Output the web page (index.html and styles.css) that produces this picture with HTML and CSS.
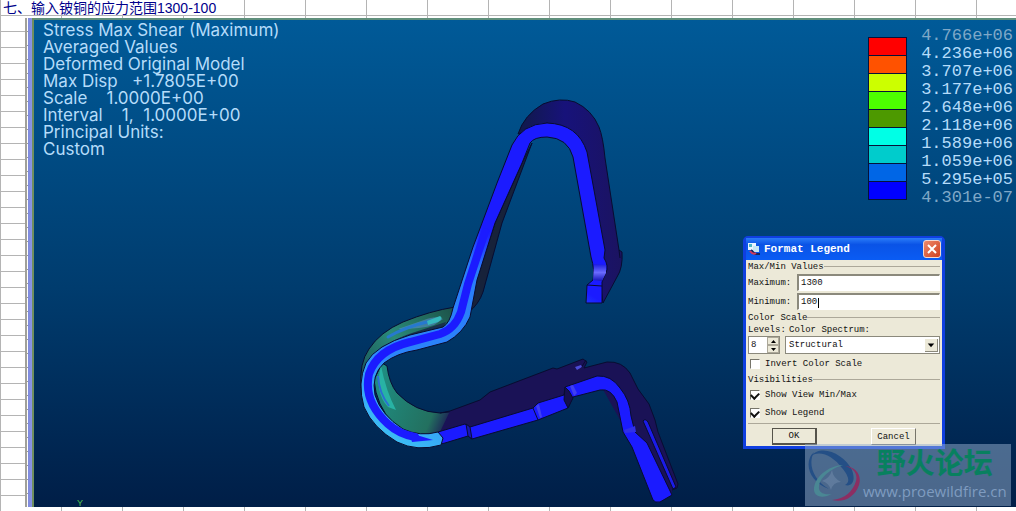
FILE: index.html
```
<!DOCTYPE html>
<html lang="zh">
<head>
    <meta charset="UTF-8">
    <title>输入铍铜的应力范围</title>
    <link rel="stylesheet" href="styles.css">
</head>
<body>
    <h1>七、输入铍铜的应力范围1300-100</h1>

    <main class="window">
        <div class="frame-edge"></div>
        <div class="viewport">
            <!-- 变形模型 -->
            <svg class="model" viewBox="34 20 982 487" preserveAspectRatio="xMinYMin meet" aria-hidden="true">
                <defs>
                    <linearGradient id="arch" x1="0" y1="0" x2="1" y2="0">
                        <stop offset="0" stop-color="#101a48"/>
                        <stop offset="0.45" stop-color="#17127a"/>
                        <stop offset="1" stop-color="#1b1360"/>
                    </linearGradient>
                    <linearGradient id="bowl" gradientUnits="userSpaceOnUse" x1="380" y1="380" x2="456" y2="410">
                        <stop offset="0" stop-color="#1f8c80"/>
                        <stop offset="0.75" stop-color="#23705f"/>
                        <stop offset="1" stop-color="#1b1555"/>
                    </linearGradient>
                    <linearGradient id="band" gradientUnits="userSpaceOnUse" x1="362" y1="370" x2="455" y2="308">
                        <stop offset="0" stop-color="#1c5c5c"/>
                        <stop offset="0.4" stop-color="#2a8a78"/>
                        <stop offset="1" stop-color="#1c5148"/>
                    </linearGradient>
                    <linearGradient id="stress" gradientUnits="userSpaceOnUse" x1="505" y1="230" x2="380" y2="430">
                        <stop offset="0.04" stop-color="#1b1bff"/>
                        <stop offset="0.2" stop-color="#2a7dfa"/>
                        <stop offset="0.7" stop-color="#2b84fa"/>
                        <stop offset="1" stop-color="#3cbcf4"/>
                    </linearGradient>
                    <linearGradient id="shine" x1="0" y1="0" x2="0" y2="1">
                        <stop offset="0" stop-color="#1b1be0"/>
                        <stop offset="0.5" stop-color="#6b6bff"/>
                        <stop offset="1" stop-color="#1616b8"/>
                    </linearGradient>
                </defs>
                <g stroke="#080c30" stroke-width="1" stroke-linejoin="round">
                    <!-- 上部弯臂 -->
                    <path fill="#17223a" d="M532 143L502 223L483 292Q479 304 468 313L470 300L495 223L522 163Z"/>
                    <path fill="url(#arch)" d="M518 134Q524 115 543 104Q560 97 575 102Q592 110 599 127Q603 137 605 158L619 250L622 252Q623 268 617 277L603 303L586 180L573 132L547 123Z"/>
                    <path fill="none" d="M619 250L620 258"/>
                    <!-- 弯勺背面 -->
                    <path fill="url(#band)" d="M455 307Q430 311 403 322Q380 332 369 349Q359 363 361 388L372 375L400 346L443 330L458 315Z"/>
                    <path fill="#18304c" stroke="none" d="M372 360Q384 342 412 333L446 322L443 329L392 345L372 363Z"/>
                    <path fill="url(#bowl)" d="M382 363L387 366Q389 383 397 393Q415 412 440 413L458 411L470 425L438 434Q410 437 394 425Q376 405 374 380Z"/>
                    <!-- 底板 -->
                    <path fill="#1a1256" stroke="none" d="M450 411L480 400L490 392L553 368L557 369L583 359L587 362L584 368L607 362Q622 361 630 373L638 389L649 404L655 420L658 432L678 484L677 488L672 490L672 495L660 502L620 420L600 384L568 395L540 410L472 434L440 432Z"/>
                    <path fill="none" d="M440 413L450 411L480 400L490 392L553 368L557 369L583 359L587 362L584 368L607 362Q622 361 630 373L638 389L649 404L655 420L658 432L678 484L677 488L672 490"/>
                    <path fill="#1b1bff" d="M438 432L465 424L470 427L533 408L538 403L564 395L565 387L597 376Q611 375 620 388Q630 400 631 416L635 432L647 443L672 495L660 502Q655 503 653 500L632 447L623 432L617 402Q611 388 600 390L573 397L568 408L538 420L472 439L468 436L445 443L428 447Z"/>
                    <path fill="#1b1be8" d="M643 421Q645 418 648 422L676 487L673 489Z"/>
                    <path fill="#15104d" d="M565 387L569 391L573 398L568 408L564 400Z"/>
                    <path fill="#1717b0" d="M466 424L470 427L472 439L468 436Z"/>
                    <path fill="none" d="M533 408L538 420M581 368L586 360"/>
                    <!-- 主截面 -->
                    <path fill="url(#stress)" d="M470 317Q463 333 447 342L417 350Q397 353 384 363Q371 375 375 395Q381 415 403 429Q420 437 438 432L443 438L441 445Q417 452 397 442Q373 428 364 407Q357 383 366 363Q376 345 410 335L443 327Q450 323 453 308L473 247L497 183L512 145Q522 124 547 123Q578 124 587 152L605 250L604 258Q609 266 606 273L602 282L602 303L586 303L587 285L593 280Q595 270 591 257L573 157Q568 138 547 137Q534 137 530 143L522 163L495 223L477 280Z"/>
                </g>
                <path fill="none" stroke="#1b1bff" stroke-width="8" stroke-linecap="round" d="M485 232L468 284L461 312Q455 329 440 334L410 342Q377 350 369 374Q363 401 388 424Q399 434 415 437"/>
                <path fill="#1b1bff" d="M410 433L433 440L412 442Z"/>
                <path fill="#6d9dff" d="M443 319Q437 315 424 320L398 329Q422 329 434 325Z" opacity="0.4"/>
                <path fill="none" stroke="#2679cf" stroke-width="3" stroke-linecap="round" d="M388 337Q405 327 431 321"/>
                <path fill="#35b9bd" d="M427 321L440 316Q444 318 438 322L428 325Z"/>
                <path fill="#28b2a4" d="M381 366Q386 391 396 410L388 407Q374 392 381 366Z"/>
                <path fill="none" stroke="#2a70d0" stroke-width="2" d="M378 376Q379 393 389 406"/>
                <path fill="url(#shine)" d="M594 264L606 265L606 273L602 281L593 280Z"/>
                <path fill="none" stroke="#080c30" d="M587 285L602 286"/>
                <path fill="#4040f0" d="M570 386L573 385L577 393L574 396ZM536 406L539 404L542 417L540 418Z"/>
                <path fill="#3030e8" d="M624 430L635 426L636 432L625 433Z"/>
                <path fill="#4b4bd8" d="M575 367L581 365L582 367L577 370Z"/>
                <text class="axis" x="77" y="506">Y</text>
            </svg>

            <div class="info">
                <p>Stress Max Shear (Maximum)</p>
                <p>Averaged Values</p>
                <p>Deformed Original Model</p>
                <p>Max Disp   +1.7805E+00</p>
                <p>Scale    1.0000E+00</p>
                <p>Interval    1,  1.0000E+00</p>
                <p>Principal Units:</p>
                <p>Custom</p>
            </div>

            <div class="legend">
                <ul class="colors">
                    <li class="red"></li>
                    <li class="orange"></li>
                    <li class="yellow"></li>
                    <li class="lime"></li>
                    <li class="green"></li>
                    <li class="aqua"></li>
                    <li class="teal"></li>
                    <li class="azure"></li>
                    <li class="blue"></li>
                </ul>
                <ul class="values">
                    <li class="limit">4.766e+06</li>
                    <li>4.236e+06</li>
                    <li>3.707e+06</li>
                    <li>3.177e+06</li>
                    <li>2.648e+06</li>
                    <li>2.118e+06</li>
                    <li>1.589e+06</li>
                    <li>1.059e+06</li>
                    <li>5.295e+05</li>
                    <li class="limit">4.301e-07</li>
                </ul>
            </div>

            <form class="dialog">
                <div class="titlebar">
                    <svg width="14" height="14" viewBox="0 0 14 14" aria-hidden="true">
                        <rect x="1" y="1" width="8" height="7" fill="#e8f4ff"/>
                        <rect x="2" y="2" width="3" height="3" fill="#49b5c5"/>
                        <rect x="6" y="4" width="6" height="6" fill="#c6e6f4"/>
                        <path d="M4 8L8 12L13 12" fill="none" stroke="#18265e" stroke-width="2"/>
                        <path d="M3 9Q6 13 9 11" fill="none" stroke="#d23b5c" stroke-width="2"/>
                    </svg>
                    <h2>Format Legend</h2>
                    <button type="button" class="close" aria-label="Close">
                        <svg width="10" height="10" viewBox="0 0 10 10"><path d="M1 1L9 9M9 1L1 9" stroke="#fff" stroke-width="2"/></svg>
                    </button>
                </div>
                <div class="content">
                    <h3>Max/Min Values</h3>
                    <div class="row">
                        <label for="maximum">Maximum:</label>
                        <input type="text" id="maximum" value="1300">
                    </div>
                    <div class="row">
                        <label for="minimum">Minimum:</label>
                        <input type="text" id="minimum" class="editing" value="100">
                    </div>
                    <h3>Color Scale</h3>
                    <div class="scale">
                        <label for="levels">Levels:</label>
                        <label for="spectrum" class="spectrum-label">Color Spectrum:</label>
                        <div class="spin">
                            <input type="text" id="levels" value="8">
                            <div class="arrows">
                                <button type="button" aria-label="Up"><svg width="5" height="3" viewBox="0 0 5 3"><path d="M0 3L2.500 0L5 3Z"/></svg></button>
                                <button type="button" aria-label="Down"><svg width="5" height="3" viewBox="0 0 5 3"><path d="M0 0L2.500 3L5 0Z"/></svg></button>
                            </div>
                        </div>
                        <div class="drop">
                            <select id="spectrum"><option>Structural</option></select>
                            <svg width="13" height="13" viewBox="0 0 13 13" aria-hidden="true"><path d="M3 5H10L6.500 9Z"/></svg>
                        </div>
                    </div>
                    <label class="check"><input type="checkbox">Invert Color Scale</label>
                    <h3>Visibilities</h3>
                    <label class="check"><input type="checkbox" checked>Show View Min/Max</label>
                    <label class="check"><input type="checkbox" checked>Show Legend</label>
                    <div class="buttons">
                        <button type="submit" class="default">OK</button>
                        <button type="button">Cancel</button>
                    </div>
                </div>
            </form>

            <div class="watermark">
                <svg width="58" height="54" viewBox="0 0 58 54" aria-hidden="true">
                    <path fill="#244f86" d="M9 4C-2 14 4 34 24 41C7 31 3 15 9 4Z"/>
                    <path fill="#244f86" d="M5 9C16 -5 39 6 47 22C51 33 47 39 40 37C46 34 43 27 37 20C28 8 14 1 5 9Z"/>
                    <path fill="#4a8794" d="M38 17C23 18 9 29 9 42C10 50 19 50 27 46C19 47 13 45 14 38C15 29 27 20 38 17Z"/>
                    <path fill="#8c2e62" d="M40 18C51 19 57 27 54 37C50 49 39 55 27 52C40 51 48 43 51 33C53 25 48 20 40 18Z"/>
                    <path fill="#8fa5c4" opacity="0.3" d="M27 22Q28 30 36 34Q28 34 26 42Q24 35 17 33Q25 30 27 22Z"/>
                </svg>
                <div class="site">
                    <strong>野火论坛</strong>
                    <a href="#">www.proewildfire.cn</a>
                </div>
            </div>
        </div>
    </main>
</body>
</html>
```

FILE: styles.css
```
* {
    box-sizing: border-box;
}

body {
    margin: 0;
    min-height: 100vh;
    display: flex;
    flex-direction: column;
    padding-bottom: 4px;
    font-family: "Liberation Sans", "Noto Sans CJK SC", sans-serif;
    /* 表格线 */
    background-color: #fff;
    background-image:
        linear-gradient(to right, #b4b4b4 1px, transparent 1px),
        linear-gradient(to bottom, transparent 15px, #b4b4b4 15px);
    background-size: 61px 16px;
}

h1, h2, h3, p, ul {
    margin: 0;
    padding: 0;
    font-weight: normal;
}

ul {
    list-style: none;
}

h1 {
    width: 243px;
    height: 15px;
    margin-left: 1px;
    padding-left: 2px;
    background-color: #fff;
    color: #00008b;
    font-size: 14px;
    line-height: 16px;
    white-space: nowrap;
}

.window {
    flex: 1;
    display: flex;
    margin: 3px 0 0 25px;
}

.frame-edge {
    width: 9px;
    background:
        linear-gradient(to right, #a0a09a 2px, transparent 2px, transparent 3px, #7d89dc 3px, #8b95e6 7px, #6f8f5f 7px),
        repeating-linear-gradient(to bottom, #fff 0, #fff 13px, #999 13px, #999 14px);
}

.viewport {
    flex: 1;
    position: relative;
    display: flex;
    justify-content: space-between;
    align-items: flex-start;
    border-top: 2px solid #5f8f7c;
    background: linear-gradient(to bottom, #005a98, #003c6e 55%, #001e47);
}

.model {
    position: absolute;
    top: 0;
    left: 0;
    width: 100%;
}

.axis {
    fill: #4fc04f;
    font-size: 9px;
}

.info {
    position: relative;
    padding: 2px 0 0 9px;
    color: #b5dcfa;
    font-family: "Inter", "DejaVu Sans", sans-serif;
    font-weight: 300;
    font-size: 17px;
    line-height: 17px;
}

.info p {
    white-space: pre;
}

.legend {
    position: relative;
    display: flex;
    gap: 14px;
    padding: 6px 3px 0 0;
}

.colors {
    width: 39px;
    margin-top: 11px;
    border: 1px solid #06123a;
    border-bottom: 0;
    align-self: flex-start;
}

.colors li {
    height: 18px;
    border-bottom: 1px solid #06123a;
}

.red { background-color: #ff0000; }
.orange { background-color: #ff5200; }
.yellow { background-color: #ccff00; }
.lime { background-color: #4dff00; }
.green { background-color: #4d9900; }
.aqua { background-color: #00ffe6; }
.teal { background-color: #00cccc; }
.azure { background-color: #0066e6; }
.blue { background-color: #0000ff; }

.values {
    padding-top: 1px;
    color: #b5dcfa;
    font-family: "Liberation Mono", monospace;
    font-size: 17px;
    line-height: 18px;
}

.values .limit {
    color: #7fa8c8;
}

.dialog {
    position: absolute;
    top: 216px;
    right: 71px;
    width: 202px;
    border: 3px solid #0f3fe0;
    border-top-width: 2px;
    border-radius: 5px 5px 0 0;
    background-color: #ece9d8;
    color: #111;
    font-family: "Liberation Mono", monospace;
    font-size: 9px;
}

.dialog input, .dialog select, .dialog button {
    margin: 0;
    padding: 0;
    font: inherit;
    color: inherit;
}

.titlebar {
    display: flex;
    align-items: center;
    gap: 3px;
    height: 22px;
    padding: 0 1px;
    background: linear-gradient(to bottom, #2a7cf8, #0a53e6 30%, #0a5cf4);
}

.titlebar h2 {
    flex: 1;
    color: #fff;
    font-size: 11px;
    font-weight: bold;
}

.dialog .close {
    display: flex;
    align-items: center;
    justify-content: center;
    width: 18px;
    height: 18px;
    border: 1px solid #f3d8d0;
    border-radius: 3px;
    background: linear-gradient(135deg, #ee8a6a, #cf4020);
}

.content {
    display: flex;
    flex-direction: column;
    gap: 2px;
    padding: 1px 2px 1px;
}

.content h3 {
    display: flex;
    align-items: center;
    height: 11px;
    font-size: 9px;
}

.content h3::after {
    content: "";
    flex: 1;
    height: 1px;
    background-color: #aca899;
}

.row {
    display: flex;
    align-items: center;
}

.row label {
    width: 49px;
}

.row input {
    flex: 1;
    min-width: 0;
    height: 17px;
    border: 1px solid #fff;
    border-top: 2px solid #8b897c;
    border-left: 2px solid #8b897c;
}

.dialog .row input {
    padding-left: 2px;
}

/* 光标 */
.row .editing {
    background: linear-gradient(#000, #000) 19px 3px / 1px 10px no-repeat #fff;
}

.scale {
    display: grid;
    grid-template-columns: 32px 1fr;
    column-gap: 5px;
    line-height: 11px;
    white-space: nowrap;
}

.spectrum-label {
    padding-left: 4px;
}

.spin, .drop {
    display: flex;
    height: 18px;
    border: 1px solid #8b897c;
    background-color: #fff;
}

.spin input {
    width: 18px;
    border: 0;
}

.dialog .spin input {
    padding-left: 2px;
}

.arrows {
    flex: 1;
    display: flex;
    flex-direction: column;
}

.arrows button {
    flex: 1;
    display: flex;
    align-items: center;
    justify-content: center;
    border: 1px solid #aca899;
    background-color: #ece9d8;
}

.drop {
    align-items: center;
    padding-right: 1px;
}

.drop select {
    flex: 1;
    appearance: none;
    border: 0;
    background-color: transparent;
}

.dialog .drop select {
    padding-left: 3px;
}

.drop svg {
    background-color: #ece9d8;
    border-right: 1px solid #8b897c;
    border-bottom: 1px solid #8b897c;
}

.check {
    display: flex;
    align-items: center;
    gap: 5px;
    height: 16px;
    padding-left: 2px;
}

.check input {
    appearance: none;
    display: flex;
    justify-content: center;
    width: 10px;
    height: 10px;
    border: 1px solid #fff;
    border-top-color: #77756a;
    border-left-color: #77756a;
    background-color: #fff;
}

.check input:checked::before {
    content: "";
    width: 7px;
    height: 4px;
    margin-top: 1px;
    border-left: 2px solid #111;
    border-bottom: 2px solid #111;
    transform: rotate(-45deg);
}

.buttons {
    display: flex;
    justify-content: space-between;
    padding: 4px 24px 0;
    border-top: 1px solid #aca899;
}

.buttons button {
    width: 45px;
    height: 17px;
    border: 1px solid #fff;
    border-right-color: #77756a;
    border-bottom-color: #77756a;
    background-color: #ece9d8;
}

.buttons .default {
    border: 1px solid #55534a;
    border-right-width: 2px;
    border-bottom-width: 2px;
}

.watermark {
    position: absolute;
    right: 5px;
    bottom: 1px;
    display: flex;
    align-items: center;
    width: 206px;
    height: 62px;
    background-color: rgba(150, 175, 205, 0.5);
}

.site {
    display: flex;
    flex-direction: column;
    align-items: center;
}

.site strong {
    color: #08805f;
    font-size: 29px;
    line-height: 32px;
}

.site a {
    color: #7f9cc0;
    font-family: "Open Sans", sans-serif;
    font-size: 15px;
    line-height: 22px;
    text-decoration: none;
}
```
